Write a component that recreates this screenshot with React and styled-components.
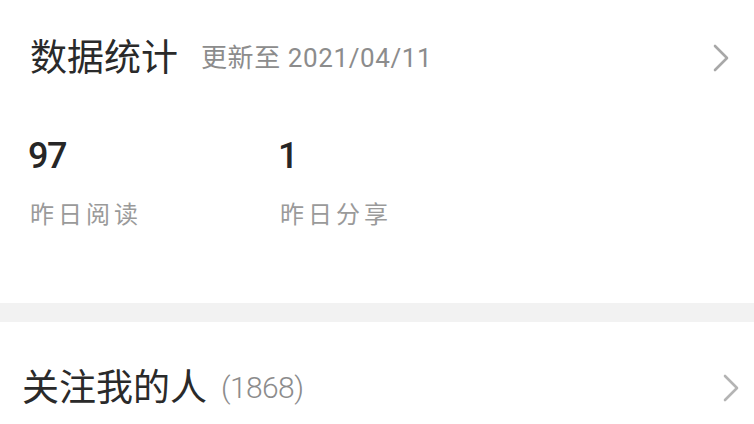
import React from "react";
import styled, { createGlobalStyle } from "styled-components";

const GlobalStyle = createGlobalStyle`
  html, body {
    margin: 0;
    padding: 0;
    background: #ffffff;
  }
  body {
    font-family: "Roboto", "Noto Sans CJK SC", sans-serif;
    -webkit-font-smoothing: antialiased;
  }
`;

const Page = styled.div`
  width: 754px;
  height: 424px;
  overflow: hidden;
  background: #ffffff;
`;

const Card = styled.section`
  padding: 34px 24px 0 30px;
  height: 303px;
  box-sizing: border-box;
`;

const Header = styled.div`
  display: flex;
  align-items: center;
  height: 48px;
`;

const Title = styled.h2`
  margin: 0;
  font-size: 37px;
  font-weight: 400;
  color: #2a2a2a;
  line-height: 1;
`;

const Sub = styled.span`
  margin-left: 23px;
  font-size: 26px;
  letter-spacing: 0.6px;
  color: #8c8c8c;
  line-height: 1;
`;

const Chevron = styled.svg`
  margin-left: auto;
  width: 18px;
  height: 30px;
  flex: none;
`;

const Stats = styled.div`
  display: grid;
  grid-template-columns: 250px 250px;
  margin-top: 54px;
`;

const Stat = styled.div`
  display: flex;
  flex-direction: column;
`;

const Value = styled.span`
  margin-left: -2px;
  font-size: 36px;
  font-weight: 500;
  letter-spacing: -1.5px;
  color: #262626;
  line-height: 40px;
`;

const Label = styled.span`
  margin-top: 24px;
  font-size: 24px;
  letter-spacing: 4px;
  color: #9a9a9a;
  line-height: 30px;
`;

const Divider = styled.div`
  height: 19px;
  background: #f2f2f2;
`;

const Row = styled.div`
  display: flex;
  align-items: center;
  padding: 0 14px 0 22px;
  height: 132px;
`;

const RowTitle = styled.span`
  font-size: 37px;
  color: #2a2a2a;
  line-height: 1;
`;

const Count = styled.span`
  margin-left: 14px;
  font-size: 30px;
  font-weight: 300;
  letter-spacing: -0.6px;
  color: #8c8c8c;
  line-height: 1;
`;

const Arrow = ({ color = "#a8a8a8" }) => (
  <Chevron viewBox="0 0 18 30" fill="none">
    <path d="M3 3 L15 15 L3 27" stroke={color} strokeWidth="2.6" strokeLinecap="round" strokeLinejoin="round" />
  </Chevron>
);

export default function App() {
  return (
    <Page>
      <GlobalStyle />
      <Card>
        <Header>
          <Title>数据统计</Title>
          <Sub>更新至 2021/04/11</Sub>
          <Arrow />
        </Header>
        <Stats>
          <Stat>
            <Value>97</Value>
            <Label>昨日阅读</Label>
          </Stat>
          <Stat>
            <Value>1</Value>
            <Label>昨日分享</Label>
          </Stat>
        </Stats>
      </Card>
      <Divider />
      <Row>
        <RowTitle>关注我的人</RowTitle>
        <Count>(1868)</Count>
        <Arrow color="#b4b4b4" />
      </Row>
    </Page>
  );
}
